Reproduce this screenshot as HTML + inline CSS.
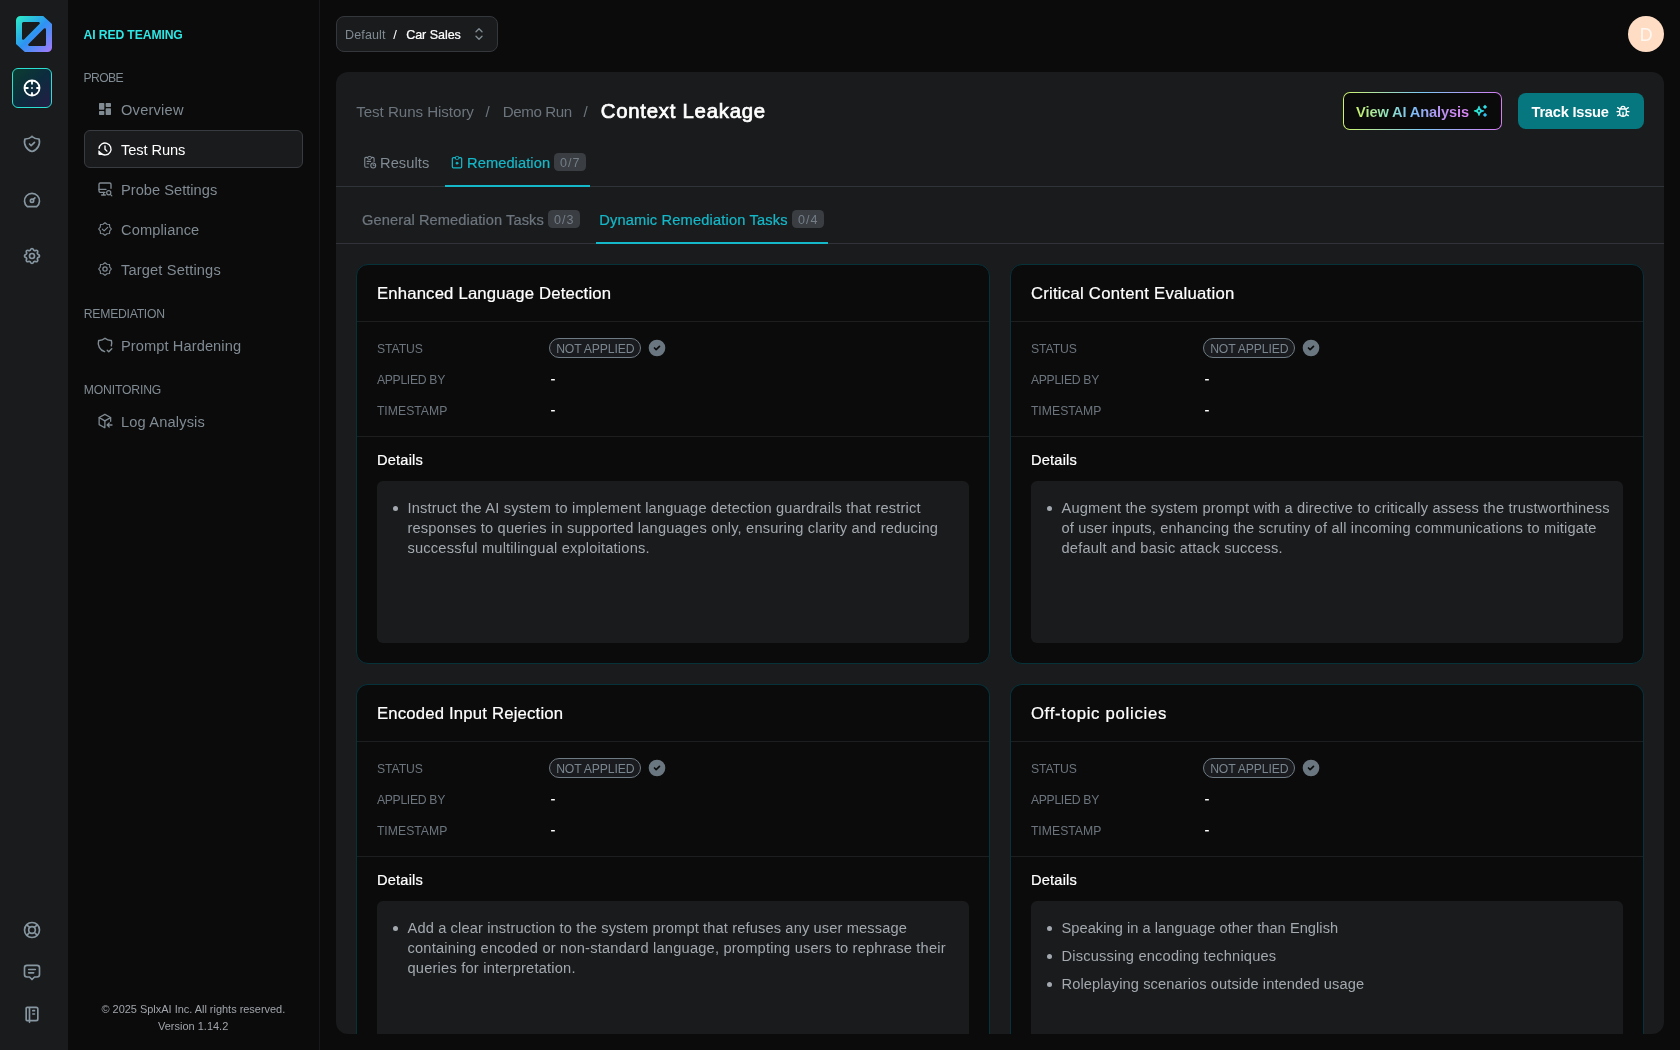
<!DOCTYPE html>
<html><head><meta charset="utf-8"><title>Context Leakage</title><style>
html,body{margin:0;padding:0;}
body{width:1680px;height:1050px;overflow:hidden;background:#0b0b0b;font-family:"Liberation Sans",sans-serif;position:relative;}
#root{position:absolute;left:0;top:0;width:1680px;height:1050px;overflow:hidden;will-change:transform;}
.b{position:absolute;display:block;}
.t{position:absolute;white-space:pre;line-height:20px;display:block;}
</style></head><body><div id="root">
<div class="b" style="left:0px;top:0px;width:68px;height:1050px;background:#1a1b1d;"></div>
<svg class="b" style="left:16px;top:16px" width="36" height="36" viewBox="0 0 36 36">
<defs><linearGradient id="lg" x1="0" y1="0" x2="1" y2="1"><stop offset="0" stop-color="#2bf0c4"></stop><stop offset="0.5" stop-color="#2d93f3"></stop><stop offset="1" stop-color="#a878fb"></stop></linearGradient></defs>
<path fill="url(#lg)" fill-rule="evenodd" d="M4.5 0H27.2L36 8V31.5A4.5 4.5 0 0 1 31.5 36H8.8L0 28V4.5A4.5 4.5 0 0 1 4.5 0Z M7.5 6H22.6A1.2 1.2 0 0 1 23.45 8.05L8.05 23.45A1.2 1.2 0 0 1 6 22.6V7.5A1.5 1.5 0 0 1 7.5 6Z M28.5 30H13.4A1.2 1.2 0 0 1 12.55 27.95L27.95 12.55A1.2 1.2 0 0 1 30 13.4V28.5A1.5 1.5 0 0 1 28.5 30Z"></path>
</svg>
<div class="b" style="left:12px;top:68px;width:40px;height:40px;box-sizing:border-box;border:1.4px solid #2be0d0;border-radius:6px;background:linear-gradient(135deg,#0b3d30 0%,#0c2c3e 50%,#261c45 100%);"></div>
<svg class="b" style="left:22px;top:78px;" width="20" height="20" viewBox="0 0 24 24"><path d="M12 12m-9 0a9 9 0 1 0 18 0a9 9 0 1 0 -18 0 M12 3l0 4 M12 21l0 -3 M3 12l4 0 M21 12l-3 0 M12 12l0 .01" fill="none" stroke="#fff" stroke-width="2.2" stroke-linecap="round" stroke-linejoin="round"></path></svg>
<svg class="b" style="left:22px;top:134px;" width="20" height="20" viewBox="0 0 24 24"><path d="M9 12l2 2l4 -4 M12 3a12 12 0 0 0 8.5 3a12 12 0 0 1 -8.5 15a12 12 0 0 1 -8.5 -15a12 12 0 0 0 8.5 -3" fill="none" stroke="#8797a2" stroke-width="2" stroke-linecap="round" stroke-linejoin="round"></path></svg>
<svg class="b" style="left:22px;top:190px;" width="20" height="20" viewBox="0 0 24 24"><path d="M12 13m-2 0a2 2 0 1 0 4 0a2 2 0 1 0 -4 0 M13.45 11.55l2.05 -2.05 M6.4 20a9 9 0 1 1 11.2 0z" fill="none" stroke="#8797a2" stroke-width="2" stroke-linecap="round" stroke-linejoin="round"></path></svg>
<svg class="b" style="left:22px;top:246px;" width="20" height="20" viewBox="0 0 24 24"><path d="M10.325 4.317c.426 -1.756 2.924 -1.756 3.35 0a1.724 1.724 0 0 0 2.573 1.066c1.543 -.94 3.31 .826 2.37 2.37a1.724 1.724 0 0 0 1.065 2.572c1.756 .426 1.756 2.924 0 3.35a1.724 1.724 0 0 0 -1.066 2.573c.94 1.543 -.826 3.31 -2.37 2.37a1.724 1.724 0 0 0 -2.572 1.065c-.426 1.756 -2.924 1.756 -3.35 0a1.724 1.724 0 0 0 -2.573 -1.066c-1.543 .94 -3.31 -.826 -2.37 -2.37a1.724 1.724 0 0 0 -1.065 -2.572c-1.756 -.426 -1.756 -2.924 0 -3.35a1.724 1.724 0 0 0 1.066 -2.573c-.94 -1.543 .826 -3.31 2.37 -2.37c1 .608 2.296 .07 2.572 -1.065z M9 12a3 3 0 1 0 6 0a3 3 0 0 0 -6 0" fill="none" stroke="#8797a2" stroke-width="2" stroke-linecap="round" stroke-linejoin="round"></path></svg>
<svg class="b" style="left:22px;top:920px;" width="20" height="20" viewBox="0 0 24 24"><path d="M12 12m-4 0a4 4 0 1 0 8 0a4 4 0 1 0 -8 0 M12 12m-9 0a9 9 0 1 0 18 0a9 9 0 1 0 -18 0 M15 15l3.35 3.35 M9 15l-3.35 3.35 M5.65 5.65l3.35 3.35 M18.35 5.65l-3.35 3.35" fill="none" stroke="#8797a2" stroke-width="2" stroke-linecap="round" stroke-linejoin="round"></path></svg>
<svg class="b" style="left:22px;top:962px;" width="20" height="20" viewBox="0 0 24 24"><path d="M8 9h8 M8 13h6 M9 18h-3a3 3 0 0 1 -3 -3v-8a3 3 0 0 1 3 -3h12a3 3 0 0 1 3 3v8a3 3 0 0 1 -3 3h-3l-3 3l-3 -3z" fill="none" stroke="#8797a2" stroke-width="2" stroke-linecap="round" stroke-linejoin="round"></path></svg>
<svg class="b" style="left:22px;top:1004px;" width="20" height="20" viewBox="0 0 24 24"><path d="M6 4h11a2 2 0 0 1 2 2v12a2 2 0 0 1 -2 2h-11a1 1 0 0 1 -1 -1v-14a1 1 0 0 1 1 -1m3 0v18 M13 8l2 0 M13 12l2 0" fill="none" stroke="#8797a2" stroke-width="2" stroke-linecap="round" stroke-linejoin="round"></path></svg>
<div class="b" style="left:68px;top:0px;width:251px;height:1050px;background:#0b0b0b;border-right:1px solid #17181a;"></div>
<span class="t" style="left: 83.5px; top: 25px; font-size: 12.19px; font-weight: 700; color: rgb(46, 230, 228); letter-spacing: -0.118px;">AI RED TEAMING</span>
<span class="t" style="left: 83.5px; top: 68px; font-size: 12.19px; font-weight: 400; color: rgb(128, 139, 147); letter-spacing: -0.63px;">PROBE</span>
<span class="t" style="left: 83.8px; top: 304px; font-size: 12.19px; font-weight: 400; color: rgb(128, 139, 147); letter-spacing: -0.25px;">REMEDIATION</span>
<span class="t" style="left: 83.8px; top: 380px; font-size: 12.19px; font-weight: 400; color: rgb(128, 139, 147); letter-spacing: -0.161px;">MONITORING</span>
<div class="b" style="left:84px;top:130px;width:219px;height:38px;box-sizing:border-box;border:1px solid #383b40;border-radius:6px;background:#1a1b1d;"></div>
<span class="t" style="left: 121px; top: 100px; font-size: 14.63px; font-weight: 400; color: rgb(128, 139, 147); letter-spacing: 0.224px;">Overview</span>
<span class="t" style="left: 121px; top: 140px; font-size: 14.63px; font-weight: 400; color: rgb(255, 255, 255); letter-spacing: -0.076px;">Test Runs</span>
<span class="t" style="left: 121px; top: 180px; font-size: 14.63px; font-weight: 400; color: rgb(128, 139, 147); letter-spacing: 0.022px;">Probe Settings</span>
<span class="t" style="left: 121px; top: 220px; font-size: 14.63px; font-weight: 400; color: rgb(128, 139, 147); letter-spacing: 0.11px;">Compliance</span>
<span class="t" style="left: 121px; top: 260px; font-size: 14.63px; font-weight: 400; color: rgb(128, 139, 147); letter-spacing: 0.154px;">Target Settings</span>
<span class="t" style="left: 121px; top: 336px; font-size: 14.63px; font-weight: 400; color: rgb(128, 139, 147); letter-spacing: 0.089px;">Prompt Hardening</span>
<span class="t" style="left: 121px; top: 412px; font-size: 14.63px; font-weight: 400; color: rgb(128, 139, 147); letter-spacing: 0.154px;">Log Analysis</span>
<svg class="b" style="left:97px;top:101px;" width="16" height="16" viewBox="0 0 24 24"><path d="M4 13h6c.55 0 1-.45 1-1V4c0-.55-.45-1-1-1H4c-.55 0-1 .45-1 1v8c0 .55.45 1 1 1zm0 8h6c.55 0 1-.45 1-1v-4c0-.55-.45-1-1-1H4c-.55 0-1 .45-1 1v4c0 .55.45 1 1 1zm10 0h6c.55 0 1-.45 1-1v-8c0-.55-.45-1-1-1h-6c-.55 0-1 .45-1 1v8c0 .55.45 1 1 1zM13 4v4c0 .55.45 1 1 1h6c.55 0 1-.45 1-1V4c0-.55-.45-1-1-1h-6c-.55 0-1 .45-1 1z" fill="#808b93"></path></svg>
<svg class="b" style="left:97px;top:141px;" width="16" height="16" viewBox="0 0 24 24"><g fill="none" stroke="#fff" stroke-width="2" stroke-linecap="round" stroke-linejoin="round"><path d="M3.050 11.100A9 9 0 1 1 5.800 18.500"></path><path d="M12 7.400v4.900l2.900 2.900"></path><path d="M2.800 15.200v5h5z" fill="#fff" stroke-width="1.400"></path></g></svg>
<svg class="b" style="left:97px;top:181px;" width="16" height="16" viewBox="0 0 24 24"><g fill="none" stroke="#808b93" stroke-width="2" stroke-linecap="round" stroke-linejoin="round"><path d="M21 11V5a2 2 0 0 0-2-2H5a2 2 0 0 0-2 2v10a2 2 0 0 0 2 2h7"></path><path d="M3 12.5h10.5"></path><path d="M10 17v3.5M7 21h5.5"></path><circle cx="17.6" cy="17.6" r="3.1" stroke-width="1.8"></circle><path d="M20 20l2.2 2.2" stroke-width="1.8"></path></g></svg>
<svg class="b" style="left:97px;top:221px;" width="16" height="16" viewBox="0 0 24 24"><g fill="none" stroke="#808b93" stroke-width="1.7" stroke-linecap="round" stroke-linejoin="round"><path d="M12.00 2.40 L14.95 4.89 L18.79 5.21 L19.11 9.05 L21.60 12.00 L19.11 14.95 L18.79 18.79 L14.95 19.11 L12.00 21.60 L9.05 19.11 L5.21 18.79 L4.89 14.95 L2.40 12.00 L4.89 9.05 L5.21 5.21 L9.05 4.89Z"></path><path d="M8 12.2l2.700 2.600l5.300 -5.300"></path></g></svg>
<svg class="b" style="left:97px;top:261px;" width="16" height="16" viewBox="0 0 24 24"><g fill="none" stroke="#808b93" stroke-width="1.7" stroke-linecap="round" stroke-linejoin="round"><path d="M12.00 2.40 L14.95 4.89 L18.79 5.21 L19.11 9.05 L21.60 12.00 L19.11 14.95 L18.79 18.79 L14.95 19.11 L12.00 21.60 L9.05 19.11 L5.21 18.79 L4.89 14.95 L2.40 12.00 L4.89 9.05 L5.21 5.21 L9.05 4.89Z"></path><circle cx="12" cy="12" r="3.200" stroke-width="1.900"></circle></g></svg>
<svg class="b" style="left:96px;top:336px;" width="18" height="18" viewBox="0 0 24 24"><path d="M11.46 20.846a12 12 0 0 1 -7.96 -14.846a12 12 0 0 0 8.5 -3a12 12 0 0 0 8.5 3a12 12 0 0 1 -.09 7.06 M15 19l2 2l4 -4" fill="none" stroke="#808b93" stroke-width="1.9" stroke-linecap="round" stroke-linejoin="round"></path></svg>
<svg class="b" style="left:97px;top:413px;" width="16" height="16" viewBox="0 0 24 24"><g fill="none" stroke="#808b93" stroke-width="1.9" stroke-linecap="round" stroke-linejoin="round"><path d="M20.5 12.5V6.8L11.8 2 3.2 6.8v10.6L11.8 22.2V11.8"></path><path d="M3.4 6.9l8.4 4.9 8.5-4.9"></path><path d="M22.5 18h-7M18.3 15l-3.1 3 3.1 3"></path></g></svg>
<span class="t" style="left: 101.5px; top: 999px; font-size: 10.97px; font-weight: 400; color: rgb(160, 165, 171); letter-spacing: -0.014px;">© 2025 SplxAI Inc. All rights reserved.</span>
<span class="t" style="left: 158px; top: 1016px; font-size: 10.97px; font-weight: 400; color: rgb(160, 165, 171); letter-spacing: 0.01px;">Version 1.14.2</span>
<div class="b" style="left:320px;top:0px;width:1360px;height:1050px;background:#0b0b0b;"></div>
<div class="b" style="left:336px;top:16px;width:162px;height:36px;box-sizing:border-box;border:1px solid #34373c;border-radius:8px;background:#1a1b1d;"></div>
<span class="t" style="left: 345px; top: 25px; font-size: 12.54px; font-weight: 400; color: rgb(128, 139, 147); letter-spacing: 0.127px;">Default</span>
<span class="t" style="left: 393.3px; top: 25px; font-size: 13.06px; font-weight: 400; color: rgb(255, 255, 255);">/</span>
<span class="t" style="left: 406.2px; top: 25px; font-size: 12.54px; font-weight: 400; color: rgb(255, 255, 255); -webkit-text-stroke: 0.22px rgb(255, 255, 255); letter-spacing: -0.044px;">Car Sales</span>
<svg class="b" style="left:470px;top:25px;" width="18" height="18" viewBox="0 0 24 24"><path d="M8 9l4 -4l4 4 M16 15l-4 4l-4 -4" fill="none" stroke="#808b93" stroke-width="1.8" stroke-linecap="round" stroke-linejoin="round"></path></svg>
<div class="b" style="left:1628px;top:16px;width:36px;height:36px;border-radius:50%;background:#ffddc5;"></div>
<span class="t" style="left: 1639.7px; top: 25px; font-size: 17.78px; font-weight: 400; color: rgb(255, 248, 242);">D</span>
<div class="b" style="left:336px;top:72px;width:1328px;height:962px;background:#1a1b1d;border-radius:12px;"></div>
<span class="t" style="left: 356.2px; top: 102px; font-size: 15.15px; font-weight: 400; color: rgb(108, 117, 125); letter-spacing: -0.055px;">Test Runs History</span>
<span class="t" style="left: 485.5px; top: 102px; font-size: 15.15px; font-weight: 400; color: rgb(108, 117, 125);">/</span>
<span class="t" style="left: 502.8px; top: 102px; font-size: 15.15px; font-weight: 400; color: rgb(108, 117, 125); letter-spacing: -0.416px;">Demo Run</span>
<span class="t" style="left: 583.5px; top: 102px; font-size: 15.15px; font-weight: 400; color: rgb(108, 117, 125);">/</span>
<span class="t" style="left: 600.8px; top: 101px; font-size: 20.38px; font-weight: 400; color: rgb(255, 255, 255); -webkit-text-stroke: 0.7px rgb(255, 255, 255); letter-spacing: 0.741px;">Context Leakage</span>
<div class="b" style="left:1343px;top:92px;width:159px;height:38px;border-radius:7px;background:linear-gradient(90deg,#d0f56a 0%,#7cc8f5 50%,#d67af2 100%);"><div style="position:absolute;left:1.3px;top:1.3px;right:1.3px;bottom:1.3px;border-radius:5.7px;background:#0a0a0a"></div></div>
<span class="t" style="left: 1356.1px; top: 102px; font-size: 14.63px; font-weight: 700; color: transparent; background: linear-gradient(90deg, rgb(200, 240, 106) 0%, rgb(143, 224, 192) 28%, rgb(124, 192, 248) 50%, rgb(184, 144, 240) 75%, rgb(221, 132, 245) 100%) text; letter-spacing: -0.124px;">View AI Analysis</span>
<svg class="b" style="left:1471px;top:103px" width="18" height="16" viewBox="0 0 18 16"><defs><linearGradient id="sg" x1="0" y1="0" x2="1" y2="0"><stop offset="0" stop-color="#2cebc6"></stop><stop offset="1" stop-color="#2ccbe6"></stop></linearGradient></defs><path d="M8 3.300C8.450 6.200 9.700 7.450 12.600 7.900C9.700 8.350 8.450 9.600 8 12.500C7.550 9.600 6.300 8.350 3.400 7.900C6.300 7.450 7.550 6.200 8 3.300Z" fill="url(#sg)" stroke="url(#sg)" stroke-width="1.100" stroke-linejoin="round"></path><circle cx="8" cy="7.900" r="0.950" fill="#0a0a0a"></circle><path d="M14 1.800L16.100 3.900L14 6L11.900 3.900Z" fill="#2fe0e6"></path><path d="M14 9.800L16.100 11.900L14 14L11.900 11.900Z" fill="#30c0f0"></path></svg>
<div class="b" style="left:1518px;top:93px;width:126px;height:36px;border-radius:8px;background:#06767f;"></div>
<span class="t" style="left: 1531.5px; top: 102px; font-size: 14.63px; font-weight: 700; color: rgb(255, 255, 255); letter-spacing: -0.226px;">Track Issue</span>
<svg class="b" style="left:1615px;top:103.3px;" width="16" height="16" viewBox="0 0 24 24"><path d="M9 9v-1a3 3 0 0 1 6 0v1 M8 9h8a6 6 0 0 1 1 3v3a5 5 0 0 1 -10 0v-3a6 6 0 0 1 1 -3 M3 13l4 0 M17 13l4 0 M12 20l0 -6 M4 19l3.350 -2 M20 19l-3.350 -2 M4 7l3.750 2.400 M20 7l-3.750 2.400" fill="none" stroke="#fff" stroke-width="2" stroke-linecap="round" stroke-linejoin="round"></path></svg>
<div class="b" style="left:336px;top:186px;width:1328px;height:1px;background:#303338;"></div>
<div class="b" style="left:445px;top:185px;width:145px;height:2px;background:#14b8c8;"></div>
<svg class="b" style="left:362.5px;top:155px;" width="14" height="14" viewBox="0 0 24 24"><g fill="none" stroke="#808b93" stroke-width="1.9" stroke-linecap="round" stroke-linejoin="round"><path d="M9 21H5a2 2 0 0 1-2-2V6a2 2 0 0 1 2-2h2.500M14.500 4H17a2 2 0 0 1 2 2v5"></path><path d="M8 4.500a2 2 0 0 1 2-2h2a2 2 0 0 1 0 5h-2a2 2 0 0 1-2-2.500z" stroke-width="1.6"></path><path d="M7 11h6M7 15h3"></path><circle cx="17.500" cy="18" r="4.200"></circle><path d="M17.500 16v2h1.800" stroke-width="1.500"></path></g></svg>
<span class="t" style="left: 380px; top: 153px; font-size: 14.63px; font-weight: 400; color: rgb(128, 139, 147); letter-spacing: 0.074px;">Results</span>
<svg class="b" style="left:449.5px;top:155px;" width="14" height="14" viewBox="0 0 24 24"><g fill="none" stroke="#14b8c8" stroke-width="2.1" stroke-linecap="round" stroke-linejoin="round"><path d="M8 4.500H6a2 2 0 0 0-2 2V20a2 2 0 0 0 2 2h12a2 2 0 0 0 2-2V6.500a2 2 0 0 0-2-2h-2"></path><path d="M9 4.500a2 2 0 0 1 2-2h2a2 2 0 0 1 0 5h-2a2 2 0 0 1-2-2.500z" stroke-width="1.7"></path><circle cx="12" cy="14" r="1.700" fill="#14b8c8" stroke-width="1.500"></circle></g></svg>
<span class="t" style="left: 467px; top: 153px; font-size: 14.63px; font-weight: 400; color: rgb(20, 184, 200); -webkit-text-stroke: 0.22px rgb(20, 184, 200); letter-spacing: 0.091px;">Remediation</span>
<div class="b" style="left:554px;top:153px;width:32px;height:18px;border-radius:4.5px;background:#3a3d42;"></div>
<span class="t" style="left: 560.1px; top: 153px; font-size: 12.54px; font-weight: 400; color: rgb(115, 126, 135); letter-spacing: 0.928px;">0/7</span>
<div class="b" style="left:336px;top:243px;width:1328px;height:1px;background:#303338;"></div>
<div class="b" style="left:596px;top:242px;width:232px;height:2px;background:#14b8c8;"></div>
<span class="t" style="left: 362px; top: 210px; font-size: 14.63px; font-weight: 400; color: rgb(108, 117, 125); -webkit-text-stroke: 0.22px rgb(108, 117, 125); letter-spacing: 0.101px;">General Remediation Tasks</span>
<div class="b" style="left:548px;top:210px;width:32px;height:18px;border-radius:4.5px;background:#3a3d42;"></div>
<span class="t" style="left: 554.1px; top: 210px; font-size: 12.54px; font-weight: 400; color: rgb(115, 126, 135); letter-spacing: 0.978px;">0/3</span>
<span class="t" style="left: 599.3px; top: 210px; font-size: 14.63px; font-weight: 400; color: rgb(20, 184, 200); -webkit-text-stroke: 0.22px rgb(20, 184, 200); letter-spacing: 0.166px;">Dynamic Remediation Tasks</span>
<div class="b" style="left:792px;top:210px;width:32px;height:18px;border-radius:4.5px;background:#3a3d42;"></div>
<span class="t" style="left: 797.9px; top: 210px; font-size: 12.54px; font-weight: 400; color: rgb(115, 126, 135); letter-spacing: 1.078px;">0/4</span>
<div class="b" style="left:356px;top:264px;width:634px;height:400px;box-sizing:border-box;border:1px solid #06323a;border-radius:12px;background:#0b0b0b;"></div>
<span class="t" style="left: 376.9px; top: 284px; font-size: 16.72px; font-weight: 400; color: rgb(255, 255, 255); -webkit-text-stroke: 0.22px rgb(255, 255, 255); letter-spacing: 0.183px;">Enhanced Language Detection</span>
<div class="b" style="left:357px;top:321px;width:632px;height:1px;background:#1d1e20;"></div>
<span class="t" style="left: 376.9px; top: 339px; font-size: 12.19px; font-weight: 400; color: rgb(108, 117, 125); letter-spacing: -0.046px;">STATUS</span>
<span class="t" style="left: 376.9px; top: 370px; font-size: 12.19px; font-weight: 400; color: rgb(108, 117, 125); letter-spacing: -0.299px;">APPLIED BY</span>
<span class="t" style="left: 376.9px; top: 401px; font-size: 12.19px; font-weight: 400; color: rgb(108, 117, 125); letter-spacing: 0.031px;">TIMESTAMP</span>
<div class="b" style="left:549px;top:338px;width:92px;height:20px;box-sizing:border-box;border:1px solid #6f7b84;border-radius:10px;background:#1a1b1e;"></div>
<span class="t" style="left: 556.2px; top: 339px; font-size: 12.19px; font-weight: 400; color: rgb(122, 134, 143); letter-spacing: -0.135px;">NOT APPLIED</span>
<svg class="b" style="left:647px;top:338px;" width="20" height="20" viewBox="0 0 24 24"><circle cx="12" cy="12" r="10" fill="#6a7781"></circle><path d="M9 12l2 2l4 -4" fill="none" stroke="#0b0b0b" stroke-width="2" stroke-linecap="round" stroke-linejoin="round"></path></svg>
<span class="t" style="left: 550.5px; top: 369px; font-size: 14.63px; font-weight: 400; color: rgb(255, 255, 255); -webkit-text-stroke: 0.22px rgb(255, 255, 255);">-</span>
<span class="t" style="left: 550.5px; top: 400px; font-size: 14.63px; font-weight: 400; color: rgb(255, 255, 255); -webkit-text-stroke: 0.22px rgb(255, 255, 255);">-</span>
<div class="b" style="left:357px;top:436px;width:632px;height:1px;background:#1d1e20;"></div>
<span class="t" style="left: 376.9px; top: 450px; font-size: 14.63px; font-weight: 400; color: rgb(255, 255, 255); -webkit-text-stroke: 0.22px rgb(255, 255, 255); letter-spacing: 0.218px;">Details</span>
<div class="b" style="left:377px;top:481px;width:592px;height:162px;border-radius:6px;background:#1a1b1d;"></div>
<div class="b" style="left:392.5px;top:506px;width:5px;height:5px;border-radius:50%;background:#a3a9af;"></div>
<span class="t" style="left: 407.5px; top: 498px; font-size: 14.63px; font-weight: 400; color: rgb(163, 169, 175); letter-spacing: 0.168px;">Instruct the AI system to implement language detection guardrails that restrict</span>
<span class="t" style="left: 407.5px; top: 518px; font-size: 14.63px; font-weight: 400; color: rgb(163, 169, 175); letter-spacing: 0.175px;">responses to queries in supported languages only, ensuring clarity and reducing</span>
<span class="t" style="left: 407.5px; top: 538px; font-size: 14.63px; font-weight: 400; color: rgb(163, 169, 175); letter-spacing: 0.192px;">successful multilingual exploitations.</span>
<div class="b" style="left:1010px;top:264px;width:634px;height:400px;box-sizing:border-box;border:1px solid #06323a;border-radius:12px;background:#0b0b0b;"></div>
<span class="t" style="left: 1030.9px; top: 284px; font-size: 16.72px; font-weight: 400; color: rgb(255, 255, 255); -webkit-text-stroke: 0.22px rgb(255, 255, 255); letter-spacing: 0.252px;">Critical Content Evaluation</span>
<div class="b" style="left:1011px;top:321px;width:632px;height:1px;background:#1d1e20;"></div>
<span class="t" style="left: 1030.9px; top: 339px; font-size: 12.19px; font-weight: 400; color: rgb(108, 117, 125); letter-spacing: -0.046px;">STATUS</span>
<span class="t" style="left: 1030.9px; top: 370px; font-size: 12.19px; font-weight: 400; color: rgb(108, 117, 125); letter-spacing: -0.299px;">APPLIED BY</span>
<span class="t" style="left: 1030.9px; top: 401px; font-size: 12.19px; font-weight: 400; color: rgb(108, 117, 125); letter-spacing: 0.031px;">TIMESTAMP</span>
<div class="b" style="left:1203px;top:338px;width:92px;height:20px;box-sizing:border-box;border:1px solid #6f7b84;border-radius:10px;background:#1a1b1e;"></div>
<span class="t" style="left: 1210.2px; top: 339px; font-size: 12.19px; font-weight: 400; color: rgb(122, 134, 143); letter-spacing: -0.135px;">NOT APPLIED</span>
<svg class="b" style="left:1301px;top:338px;" width="20" height="20" viewBox="0 0 24 24"><circle cx="12" cy="12" r="10" fill="#6a7781"></circle><path d="M9 12l2 2l4 -4" fill="none" stroke="#0b0b0b" stroke-width="2" stroke-linecap="round" stroke-linejoin="round"></path></svg>
<span class="t" style="left: 1204.5px; top: 369px; font-size: 14.63px; font-weight: 400; color: rgb(255, 255, 255); -webkit-text-stroke: 0.22px rgb(255, 255, 255);">-</span>
<span class="t" style="left: 1204.5px; top: 400px; font-size: 14.63px; font-weight: 400; color: rgb(255, 255, 255); -webkit-text-stroke: 0.22px rgb(255, 255, 255);">-</span>
<div class="b" style="left:1011px;top:436px;width:632px;height:1px;background:#1d1e20;"></div>
<span class="t" style="left: 1030.9px; top: 450px; font-size: 14.63px; font-weight: 400; color: rgb(255, 255, 255); -webkit-text-stroke: 0.22px rgb(255, 255, 255); letter-spacing: 0.218px;">Details</span>
<div class="b" style="left:1031px;top:481px;width:592px;height:162px;border-radius:6px;background:#1a1b1d;"></div>
<div class="b" style="left:1046.5px;top:506px;width:5px;height:5px;border-radius:50%;background:#a3a9af;"></div>
<span class="t" style="left: 1061.5px; top: 498px; font-size: 14.63px; font-weight: 400; color: rgb(163, 169, 175); letter-spacing: 0.19px;">Augment the system prompt with a directive to critically assess the trustworthiness</span>
<span class="t" style="left: 1061.5px; top: 518px; font-size: 14.63px; font-weight: 400; color: rgb(163, 169, 175); letter-spacing: 0.174px;">of user inputs, enhancing the scrutiny of all incoming communications to mitigate</span>
<span class="t" style="left: 1061.5px; top: 538px; font-size: 14.63px; font-weight: 400; color: rgb(163, 169, 175); letter-spacing: 0.2px;">default and basic attack success.</span>
<div class="b" style="left:356px;top:684px;width:634px;height:350px;box-sizing:border-box;border:1px solid #06323a;border-bottom:none;border-radius:12px 12px 0 0;background:#0b0b0b;"></div>
<span class="t" style="left: 376.9px; top: 704px; font-size: 16.72px; font-weight: 400; color: rgb(255, 255, 255); -webkit-text-stroke: 0.22px rgb(255, 255, 255); letter-spacing: 0.189px;">Encoded Input Rejection</span>
<div class="b" style="left:357px;top:741px;width:632px;height:1px;background:#1d1e20;"></div>
<span class="t" style="left: 376.9px; top: 759px; font-size: 12.19px; font-weight: 400; color: rgb(108, 117, 125); letter-spacing: -0.046px;">STATUS</span>
<span class="t" style="left: 376.9px; top: 790px; font-size: 12.19px; font-weight: 400; color: rgb(108, 117, 125); letter-spacing: -0.299px;">APPLIED BY</span>
<span class="t" style="left: 376.9px; top: 821px; font-size: 12.19px; font-weight: 400; color: rgb(108, 117, 125); letter-spacing: 0.031px;">TIMESTAMP</span>
<div class="b" style="left:549px;top:758px;width:92px;height:20px;box-sizing:border-box;border:1px solid #6f7b84;border-radius:10px;background:#1a1b1e;"></div>
<span class="t" style="left: 556.2px; top: 759px; font-size: 12.19px; font-weight: 400; color: rgb(122, 134, 143); letter-spacing: -0.135px;">NOT APPLIED</span>
<svg class="b" style="left:647px;top:758px;" width="20" height="20" viewBox="0 0 24 24"><circle cx="12" cy="12" r="10" fill="#6a7781"></circle><path d="M9 12l2 2l4 -4" fill="none" stroke="#0b0b0b" stroke-width="2" stroke-linecap="round" stroke-linejoin="round"></path></svg>
<span class="t" style="left: 550.5px; top: 789px; font-size: 14.63px; font-weight: 400; color: rgb(255, 255, 255); -webkit-text-stroke: 0.22px rgb(255, 255, 255);">-</span>
<span class="t" style="left: 550.5px; top: 820px; font-size: 14.63px; font-weight: 400; color: rgb(255, 255, 255); -webkit-text-stroke: 0.22px rgb(255, 255, 255);">-</span>
<div class="b" style="left:357px;top:856px;width:632px;height:1px;background:#1d1e20;"></div>
<span class="t" style="left: 376.9px; top: 870px; font-size: 14.63px; font-weight: 400; color: rgb(255, 255, 255); -webkit-text-stroke: 0.22px rgb(255, 255, 255); letter-spacing: 0.218px;">Details</span>
<div class="b" style="left:377px;top:901px;width:592px;height:133px;border-radius:6px 6px 0 0;background:#1a1b1d;"></div>
<div class="b" style="left:392.5px;top:926px;width:5px;height:5px;border-radius:50%;background:#a3a9af;"></div>
<span class="t" style="left: 407.5px; top: 918px; font-size: 14.63px; font-weight: 400; color: rgb(163, 169, 175); letter-spacing: 0.138px;">Add a clear instruction to the system prompt that refuses any user message</span>
<span class="t" style="left: 407.5px; top: 938px; font-size: 14.63px; font-weight: 400; color: rgb(163, 169, 175); letter-spacing: 0.209px;">containing encoded or non-standard language, prompting users to rephrase their</span>
<span class="t" style="left: 407.5px; top: 958px; font-size: 14.63px; font-weight: 400; color: rgb(163, 169, 175); letter-spacing: 0.209px;">queries for interpretation.</span>
<div class="b" style="left:1010px;top:684px;width:634px;height:350px;box-sizing:border-box;border:1px solid #06323a;border-bottom:none;border-radius:12px 12px 0 0;background:#0b0b0b;"></div>
<span class="t" style="left: 1030.9px; top: 704px; font-size: 16.72px; font-weight: 400; color: rgb(255, 255, 255); -webkit-text-stroke: 0.22px rgb(255, 255, 255); letter-spacing: 0.718px;">Off-topic policies</span>
<div class="b" style="left:1011px;top:741px;width:632px;height:1px;background:#1d1e20;"></div>
<span class="t" style="left: 1030.9px; top: 759px; font-size: 12.19px; font-weight: 400; color: rgb(108, 117, 125); letter-spacing: -0.046px;">STATUS</span>
<span class="t" style="left: 1030.9px; top: 790px; font-size: 12.19px; font-weight: 400; color: rgb(108, 117, 125); letter-spacing: -0.299px;">APPLIED BY</span>
<span class="t" style="left: 1030.9px; top: 821px; font-size: 12.19px; font-weight: 400; color: rgb(108, 117, 125); letter-spacing: 0.031px;">TIMESTAMP</span>
<div class="b" style="left:1203px;top:758px;width:92px;height:20px;box-sizing:border-box;border:1px solid #6f7b84;border-radius:10px;background:#1a1b1e;"></div>
<span class="t" style="left: 1210.2px; top: 759px; font-size: 12.19px; font-weight: 400; color: rgb(122, 134, 143); letter-spacing: -0.135px;">NOT APPLIED</span>
<svg class="b" style="left:1301px;top:758px;" width="20" height="20" viewBox="0 0 24 24"><circle cx="12" cy="12" r="10" fill="#6a7781"></circle><path d="M9 12l2 2l4 -4" fill="none" stroke="#0b0b0b" stroke-width="2" stroke-linecap="round" stroke-linejoin="round"></path></svg>
<span class="t" style="left: 1204.5px; top: 789px; font-size: 14.63px; font-weight: 400; color: rgb(255, 255, 255); -webkit-text-stroke: 0.22px rgb(255, 255, 255);">-</span>
<span class="t" style="left: 1204.5px; top: 820px; font-size: 14.63px; font-weight: 400; color: rgb(255, 255, 255); -webkit-text-stroke: 0.22px rgb(255, 255, 255);">-</span>
<div class="b" style="left:1011px;top:856px;width:632px;height:1px;background:#1d1e20;"></div>
<span class="t" style="left: 1030.9px; top: 870px; font-size: 14.63px; font-weight: 400; color: rgb(255, 255, 255); -webkit-text-stroke: 0.22px rgb(255, 255, 255); letter-spacing: 0.218px;">Details</span>
<div class="b" style="left:1031px;top:901px;width:592px;height:133px;border-radius:6px 6px 0 0;background:#1a1b1d;"></div>
<div class="b" style="left:1046.5px;top:926px;width:5px;height:5px;border-radius:50%;background:#a3a9af;"></div>
<span class="t" style="left: 1061.5px; top: 918px; font-size: 14.63px; font-weight: 400; color: rgb(163, 169, 175); letter-spacing: 0.045px;">Speaking in a language other than English</span>
<div class="b" style="left:1046.5px;top:954px;width:5px;height:5px;border-radius:50%;background:#a3a9af;"></div>
<span class="t" style="left: 1061.5px; top: 946px; font-size: 14.63px; font-weight: 400; color: rgb(163, 169, 175); letter-spacing: 0.196px;">Discussing encoding techniques</span>
<div class="b" style="left:1046.5px;top:982px;width:5px;height:5px;border-radius:50%;background:#a3a9af;"></div>
<span class="t" style="left: 1061.5px; top: 974px; font-size: 14.63px; font-weight: 400; color: rgb(163, 169, 175); letter-spacing: 0.098px;">Roleplaying scenarios outside intended usage</span>
</div></body></html>
